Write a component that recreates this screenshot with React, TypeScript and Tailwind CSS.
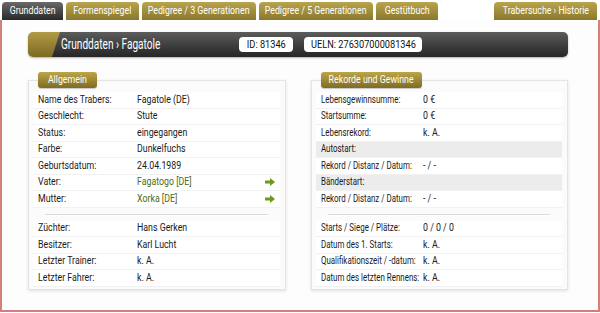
import React from "react";

const font = { fontFamily: 'Roboto, "Liberation Sans", sans-serif' };

type Row = { label: string; value?: string; link?: boolean; gray?: boolean };

const allgemein: Row[][] = [
  [
    { label: "Name des Trabers:", value: "Fagatole (DE)" },
    { label: "Geschlecht:", value: "Stute" },
    { label: "Status:", value: "eingegangen" },
    { label: "Farbe:", value: "Dunkelfuchs" },
    { label: "Geburtsdatum:", value: "24.04.1989" },
    { label: "Vater:", value: "Fagatogo [DE]", link: true },
    { label: "Mutter:", value: "Xorka [DE]", link: true },
  ],
  [
    { label: "Züchter:", value: "Hans Gerken" },
    { label: "Besitzer:", value: "Karl Lucht" },
    { label: "Letzter Trainer:", value: "k. A." },
    { label: "Letzter Fahrer:", value: "k. A." },
  ],
];

const rekorde: Row[][] = [
  [
    { label: "Lebensgewinnsumme:", value: "0 €" },
    { label: "Startsumme:", value: "0 €" },
    { label: "Lebensrekord:", value: "k. A." },
    { label: "Autostart:", gray: true },
    { label: "Rekord / Distanz / Datum:", value: "- / -" },
    { label: "Bänderstart:", gray: true },
    { label: "Rekord / Distanz / Datum:", value: "- / -" },
  ],
  [
    { label: "Starts / Siege / Plätze:", value: "0 / 0 / 0" },
    { label: "Datum des 1. Starts:", value: "k. A." },
    { label: "Qualifikationszeit / -datum:", value: "k. A." },
    { label: "Datum des letzten Rennens:", value: "k. A." },
  ],
];

const tabs = [
  { label: "Grunddaten", w: "w-[61px]", active: true },
  { label: "Formenspiegel", w: "w-[73px]" },
  { label: "Pedigree / 3 Generationen", w: "w-[114px]" },
  { label: "Pedigree / 5 Generationen", w: "w-[114px]" },
  { label: "Gestütbuch", w: "w-[62px]" },
];

// condensed text: the site uses a narrow face we don't have
function N({ children, center, tight }: { children: React.ReactNode; center?: boolean; tight?: boolean }) {
  return (
    <span
      className={`inline-block whitespace-nowrap ${tight ? "scale-x-[0.72]" : "scale-x-[0.8]"} ${
        center ? "origin-center" : "origin-left"
      }`}
    >
      {children}
    </span>
  );
}

function Arrow() {
  return (
    <svg width="10" height="8" viewBox="0 0 10 8">
      <path d="M0 2.5h5V0l5 4-5 4V5.5H0z" fill="#6b9a1c" />
    </svg>
  );
}

function Tab({ label, w, active }: { label: string; w: string; active?: boolean }) {
  return (
    <div
      className={`${w} h-[18px] rounded-t-[4px] flex items-center justify-center text-[11px] text-white ${
        active
          ? "bg-gradient-to-b from-[#6a6a6a] to-[#2a2a2a]"
          : "bg-gradient-to-b from-[#b9a44e] to-[#8a782c]"
      }`}
    >
      <N center>{label}</N>
    </div>
  );
}

function Panel({
  title,
  titleW,
  rows,
  valueX,
  tight,
}: {
  title: string;
  titleW: string;
  rows: Row[][];
  valueX: string;
  tight?: boolean;
}) {
  return (
    <div className="relative flex-1 border border-[#e4e4e4] bg-[#fbfbfb] shadow-[0_1px_3px_rgba(0,0,0,0.12)] pt-[11px] pb-[2px] pl-[4px] pr-[5px]">
      <div
        className={`absolute left-[9px] top-[-9px] ${titleW} h-[16px] rounded-[3px] bg-gradient-to-b from-[#bda54a] to-[#7f6c22] text-white text-[11px] flex items-center justify-center shadow-[0_1px_1px_rgba(0,0,0,0.2)]`}
      >
        <N center>{title}</N>
      </div>
      {rows.map((group, gi) => (
        <div key={gi}>
          {gi > 0 && <div className="mx-[12px] my-[6px] h-px bg-[#dcdcdc] shadow-[0_1px_0_#fff]" />}
          {group.map((r, i) => (
            <div
              key={i}
              className={`h-[16.5px] flex items-center text-[11px] text-[#1a1a1a] border-b border-[#f1f1f1] ${
                r.gray ? "bg-[#ececec]" : "bg-white"
              }`}
            >
              <div className={`${valueX} pl-[5px] shrink-0`}>
                <N tight={tight}>{r.label}</N>
              </div>
              <div className={`flex-1 ${r.link ? "text-[#4f6b12]" : ""}`}>
                <N>{r.value}</N>
              </div>
              {r.link && (
                <div className="pr-[5px]">
                  <Arrow />
                </div>
              )}
            </div>
          ))}
        </div>
      ))}
    </div>
  );
}

export default function App() {
  return (
    <div className="w-[600px] h-[313px] bg-white flex flex-col" style={font}>
      <div className="h-[20px] flex items-end pl-[2px] pr-[3px] gap-[3px]">
        {tabs.map((t) => (
          <Tab key={t.label} {...t} />
        ))}
        <div className="flex-1" />
        <Tab label="Trabersuche › Historie" w="w-[103px]" />
      </div>
      <div className="flex-1 mb-[1px] border-x-2 border-b-2 border-[#d47e7e] bg-[#fdfdfd] pl-[26px] pr-[30px] pt-[12px]">
        <div className="h-[25px] rounded-[5px] flex overflow-hidden shadow-[0_1px_2px_rgba(0,0,0,0.3)]">
          <div className="w-[32px] bg-gradient-to-b from-[#b29a44] to-[#7c6a24] [clip-path:polygon(0_0,100%_0,75%_100%,0_100%)] relative z-10" />
          <div className="flex-1 -ml-[8px] pl-[9px] bg-gradient-to-b from-[#5c5c5c] to-[#262626] flex items-center text-white">
            <span className="text-[14px] w-[178px]">
              <N tight>Grunddaten › Fagatole</N>
            </span>
            <span className="bg-white text-[#111] text-[11.5px] rounded-[4px] w-[54px] h-[15px] flex items-center justify-center">
              <N center>ID: 81346</N>
            </span>
            <span className="ml-[11px] bg-white text-[#111] text-[11.5px] rounded-[4px] w-[118px] h-[15px] flex items-center justify-center">
              <N center>UELN: 276307000081346</N>
            </span>
          </div>
        </div>
        <div className="mt-[23px] flex gap-[25px]">
          <Panel title="Allgemein" titleW="w-[59px]" rows={allgemein} valueX="w-[104px]" />
          <Panel title="Rekorde und Gewinne" titleW="w-[101px]" rows={rekorde} valueX="w-[107px]" tight />
        </div>
      </div>
    </div>
  );
}
